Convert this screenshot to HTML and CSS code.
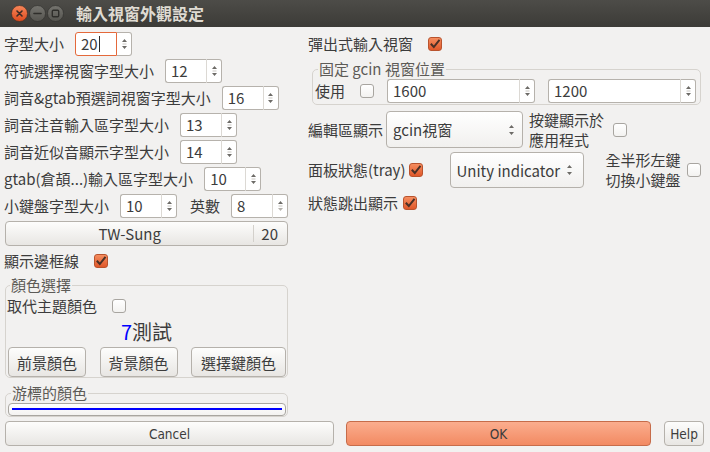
FILE: index.html
```html
<!DOCTYPE html>
<html lang="zh-Hant">
<head>
<meta charset="utf-8">
<title>輸入視窗外觀設定</title>
<link rel="stylesheet" href="styles.css">
</head>
<body>
<div class="window">
  <header class="titlebar">
    <div class="wm-buttons">
      <svg class="wm" width="17" height="17" viewBox="0 0 17 17">
        <defs><linearGradient id="gc" x1="0" y1="0" x2="0" y2="1"><stop offset="0" stop-color="#f7875a"/><stop offset="1" stop-color="#dc4a1e"/></linearGradient></defs>
        <circle cx="8.5" cy="8.5" r="8" fill="url(#gc)" stroke="#3a2a22" stroke-width="0.6"/>
        <path d="M6 6 L11 11 M11 6 L6 11" stroke="#3b2b25" stroke-width="1.6" stroke-linecap="round"/>
      </svg>
      <svg class="wm" width="17" height="17" viewBox="0 0 17 17">
        <defs><linearGradient id="gm" x1="0" y1="0" x2="0" y2="1"><stop offset="0" stop-color="#75746f"/><stop offset="1" stop-color="#55544f"/></linearGradient></defs>
        <circle cx="8.5" cy="8.5" r="8" fill="url(#gm)" stroke="#2e2d2a" stroke-width="0.6"/>
        <path d="M5 8.5 H12" stroke="#2f2e2b" stroke-width="1.6" stroke-linecap="round"/>
      </svg>
      <svg class="wm" width="17" height="17" viewBox="0 0 17 17">
        <circle cx="8.5" cy="8.5" r="8" fill="url(#gm)" stroke="#2e2d2a" stroke-width="0.6"/>
        <rect x="5.3" y="5.3" width="6.4" height="6.4" rx="1" fill="none" stroke="#2f2e2b" stroke-width="1.4"/>
      </svg>
    </div>
    <h1 class="title">輸入視窗外觀設定</h1>
  </header>

  <main class="content">
    <section class="col-left">
      <div class="row">
        <span class="lbl">字型大小</span>
        <div class="spin spin-s focus"><span class="spin-val">20<span class="caret"></span></span><span class="spin-btns"><svg width="7" height="18" viewBox="0 0 7 18"><path d="M1 7 L3.5 4 L6 7 Z M1 11 L3.5 14 L6 11 Z" fill="#6d6b67"/><path d="M1.5 9 H5.5" stroke="#c9c6c1" stroke-width="1"/></svg></span></div>
      </div>
      <div class="row">
        <span class="lbl">符號選擇視窗字型大小</span>
        <div class="spin spin-s"><span class="spin-val">12</span><span class="spin-btns"><svg width="7" height="18" viewBox="0 0 7 18"><path d="M1 7 L3.5 4 L6 7 Z M1 11 L3.5 14 L6 11 Z" fill="#6d6b67"/><path d="M1.5 9 H5.5" stroke="#c9c6c1" stroke-width="1"/></svg></span></div>
      </div>
      <div class="row">
        <span class="lbl">詞音&amp;gtab預選詞視窗字型大小</span>
        <div class="spin spin-s"><span class="spin-val">16</span><span class="spin-btns"><svg width="7" height="18" viewBox="0 0 7 18"><path d="M1 7 L3.5 4 L6 7 Z M1 11 L3.5 14 L6 11 Z" fill="#6d6b67"/><path d="M1.5 9 H5.5" stroke="#c9c6c1" stroke-width="1"/></svg></span></div>
      </div>
      <div class="row">
        <span class="lbl">詞音注音輸入區字型大小</span>
        <div class="spin spin-s"><span class="spin-val">13</span><span class="spin-btns"><svg width="7" height="18" viewBox="0 0 7 18"><path d="M1 7 L3.5 4 L6 7 Z M1 11 L3.5 14 L6 11 Z" fill="#6d6b67"/><path d="M1.5 9 H5.5" stroke="#c9c6c1" stroke-width="1"/></svg></span></div>
      </div>
      <div class="row">
        <span class="lbl">詞音近似音顯示字型大小</span>
        <div class="spin spin-s"><span class="spin-val">14</span><span class="spin-btns"><svg width="7" height="18" viewBox="0 0 7 18"><path d="M1 7 L3.5 4 L6 7 Z M1 11 L3.5 14 L6 11 Z" fill="#6d6b67"/><path d="M1.5 9 H5.5" stroke="#c9c6c1" stroke-width="1"/></svg></span></div>
      </div>
      <div class="row">
        <span class="lbl">gtab(倉頡...)輸入區字型大小</span>
        <div class="spin spin-s"><span class="spin-val">10</span><span class="spin-btns"><svg width="7" height="18" viewBox="0 0 7 18"><path d="M1 7 L3.5 4 L6 7 Z M1 11 L3.5 14 L6 11 Z" fill="#6d6b67"/><path d="M1.5 9 H5.5" stroke="#c9c6c1" stroke-width="1"/></svg></span></div>
      </div>
      <div class="row">
        <span class="lbl">小鍵盤字型大小</span>
        <div class="spin spin-s"><span class="spin-val">10</span><span class="spin-btns"><svg width="7" height="18" viewBox="0 0 7 18"><path d="M1 7 L3.5 4 L6 7 Z M1 11 L3.5 14 L6 11 Z" fill="#6d6b67"/><path d="M1.5 9 H5.5" stroke="#c9c6c1" stroke-width="1"/></svg></span></div>
        <span class="lbl lbl-en">英數</span>
        <div class="spin spin-s"><span class="spin-val">8</span><span class="spin-btns"><svg width="7" height="18" viewBox="0 0 7 18"><path d="M1 7 L3.5 4 L6 7 Z" fill="#6d6b67"/><path d="M1 11 L3.5 14 L6 11 Z" fill="#b5b2ad"/><path d="M1.5 9 H5.5" stroke="#c9c6c1" stroke-width="1"/></svg></span></div>
      </div>
      <button class="btn font-btn"><span class="font-name">TW-Sung</span><span class="font-size">20</span></button>
      <div class="row">
        <span class="lbl">顯示邊框線</span>
        <span class="check on ck-gap"><svg width="12" height="12" viewBox="0 0 12 12"><path d="M1.8 5.8 L4.8 9 L10.5 1.8" fill="none" stroke="#4a3026" stroke-width="2"/></svg></span>
      </div>

      <fieldset class="frame color-frame">
        <legend>顏色選擇</legend>
        <div class="row row-tight">
          <span class="lbl">取代主題顏色</span>
          <span class="check ck-gap"></span>
        </div>
        <div class="sample"><span class="sample-num">7</span>測試</div>
        <div class="color-btns">
          <button class="btn cbtn">前景顏色</button>
          <button class="btn cbtn">背景顏色</button>
          <button class="btn cbtn cbtn-wide">選擇鍵顏色</button>
        </div>
      </fieldset>

      <fieldset class="frame cursor-frame">
        <legend>游標的顏色</legend>
        <div class="cursor-bar"><div class="cursor-line"></div></div>
      </fieldset>
    </section>

    <section class="col-right">
      <div class="row">
        <span class="lbl">彈出式輸入視窗</span>
        <span class="check on ck-gap"><svg width="12" height="12" viewBox="0 0 12 12"><path d="M1.8 5.8 L4.8 9 L10.5 1.8" fill="none" stroke="#4a3026" stroke-width="2"/></svg></span>
      </div>

      <fieldset class="frame pos-frame">
        <legend>固定 gcin 視窗位置</legend>
        <div class="row">
          <span class="lbl">使用</span>
          <span class="check use-check"></span>
          <div class="spin spin-l pos1"><span class="spin-val">1600</span><span class="spin-btns"><svg width="7" height="18" viewBox="0 0 7 18"><path d="M1 7 L3.5 4 L6 7 Z M1 11 L3.5 14 L6 11 Z" fill="#6d6b67"/><path d="M1.5 9 H5.5" stroke="#c9c6c1" stroke-width="1"/></svg></span></div>
          <div class="spin spin-l pos2"><span class="spin-val">1200</span><span class="spin-btns"><svg width="7" height="18" viewBox="0 0 7 18"><path d="M1 7 L3.5 4 L6 7 Z M1 11 L3.5 14 L6 11 Z" fill="#6d6b67"/><path d="M1.5 9 H5.5" stroke="#c9c6c1" stroke-width="1"/></svg></span></div>
        </div>
      </fieldset>

      <div class="row row-combo edit-row">
        <span class="lbl">編輯區顯示</span>
        <div class="combo combo-edit"><span class="combo-text">gcin視窗</span><svg width="7" height="14" viewBox="0 0 7 14"><path d="M1 5 L3.5 2 L6 5 Z M1 9 L3.5 12 L6 9 Z" fill="#6d6b67"/></svg></div>
        <span class="lbl2 keys-lbl">按鍵顯示於<br>應用程式</span>
        <span class="check keys-check"></span>
      </div>

      <div class="row row-combo tray-row">
        <span class="lbl">面板狀態(tray)</span>
        <span class="check on tray-check"><svg width="12" height="12" viewBox="0 0 12 12"><path d="M1.8 5.8 L4.8 9 L10.5 1.8" fill="none" stroke="#4a3026" stroke-width="2"/></svg></span>
        <div class="combo combo-tray"><span class="combo-text">Unity indicator</span><svg width="7" height="14" viewBox="0 0 7 14"><path d="M1 5 L3.5 2 L6 5 Z M1 9 L3.5 12 L6 9 Z" fill="#6d6b67"/></svg></div>
        <span class="lbl2 shift-lbl">全半形左鍵<br>切換小鍵盤</span>
        <span class="check shift-check"></span>
      </div>

      <div class="row status-row">
        <span class="lbl">狀態跳出顯示</span>
        <span class="check on status-check"><svg width="12" height="12" viewBox="0 0 12 12"><path d="M1.8 5.8 L4.8 9 L10.5 1.8" fill="none" stroke="#4a3026" stroke-width="2"/></svg></span>
      </div>
    </section>
  </main>

  <footer class="actions">
    <button class="btn act cancel">Cancel</button>
    <button class="btn act ok">OK</button>
    <button class="btn act help">Help</button>
  </footer>
</div>
</body>
</html>
```

FILE: styles.css
```css
* { box-sizing: border-box; }
html, body { margin: 0; padding: 0; }
body {
  width: 710px;
  height: 452px;
  overflow: hidden;
  background: #f2f1f0;
  font-family: "Noto Sans CJK TC", "Noto Sans", sans-serif;
  font-size: 15px;
  color: #3c3c3c;
}
.window {
  width: 710px;
  height: 452px;
  display: flex;
  flex-direction: column;
}

/* title bar */
.titlebar {
  flex: none;
  height: 27px;
  display: flex;
  align-items: center;
  padding-left: 11px;
  background: linear-gradient(#4d4c48, #3c3b37);
}
.wm-buttons { display: flex; gap: 1px; }
.wm { display: block; }
.title {
  margin: 0 0 0 12px;
  font-size: 16px;
  font-weight: bold;
  color: #dfdbd2;
  line-height: 27px;
}

/* main */
.content {
  flex: 1;
  display: flex;
  padding: 5px 0 0 4px;
}
.col-left {
  width: 284px;
  display: flex;
  flex-direction: column;
  gap: 3px;
}
.col-right {
  margin-left: 20px;
  width: 395px;
  display: flex;
  flex-direction: column;
}
.row {
  display: flex;
  align-items: center;
  height: 24px;
  white-space: nowrap;
}
.lbl { margin-right: 11px; line-height: 20px; }
.lbl-en { margin-left: 13px; }
.row-tight { height: 20px; }

/* spin buttons */
.spin { display: flex; height: 24px; flex: none; }
.spin-s { width: 57px; }
.spin-l { width: 148px; }
.spin-val {
  flex: 1;
  display: flex;
  align-items: center;
  padding-left: 5px;
  background: #fff;
  border: 1px solid #b6b2ac;
  border-right-color: #dcd9d4;
  border-radius: 3px 0 0 3px;
  line-height: 20px;
}
.spin-btns {
  width: 15px;
  display: flex;
  align-items: center;
  justify-content: center;
  background: #fff;
  border: 1px solid #b6b2ac;
  border-left: none;
  border-radius: 0 3px 3px 0;
}
.spin-btns svg { display: block; }
.focus .spin-val { border-color: #e4693b; }
.caret {
  display: inline-block;
  width: 1px;
  height: 16px;
  margin-left: 1px;
  background: #2b2b2b;
}

/* checkboxes */
.check {
  flex: none;
  width: 14px;
  height: 14px;
  border: 1px solid #a8a5a0;
  border-radius: 3px;
  background: linear-gradient(#ffffff, #f3f2f0);
  display: flex;
  align-items: center;
  justify-content: center;
}
.check.on {
  background: linear-gradient(#f58d5f, #e0582a);
  border-color: #b9532d;
}
.check svg { display: block; }
.ck-gap { margin-left: 4px; }

/* buttons */
.btn {
  font: inherit;
  color: #3c3c3c;
  border: 1px solid #b5b1ab;
  border-radius: 4px;
  background: linear-gradient(#fdfdfc, #e8e6e3);
  padding: 0;
  margin: 0;
}
.font-btn {
  height: 25px;
  width: 283px;
  margin-left: 1px;
  display: flex;
  align-items: center;
}
.font-name { flex: 1; text-align: center; }
.font-size {
  border-left: 1px solid #d3d0cb;
  height: 17px;
  line-height: 17px;
  padding: 0 9px 0 7px;
}

/* frames */
.frame {
  margin: 0 0 0 1px;
  border: 1px solid #d6d3ce;
  border-radius: 5px;
  min-width: 0;
}
.frame legend {
  padding: 0 1px;
  margin-left: 3px;
  line-height: 16px;
  color: #5d5b57;
}
.color-frame {
  width: 283px;
  margin-top: 1px;
  padding: 3px 1px 0 1px;
}
.sample {
  margin-top: 2px;
  height: 28px;
  line-height: 28px;
  text-align: center;
  font-size: 20px;
}
.sample-num { color: #0000ff; }
.color-btns {
  margin-top: 1px;
  display: flex;
  justify-content: space-between;
  padding-left: 1px;
}
.cbtn { width: 78px; height: 30px; }
.cbtn-wide { width: 95px; }
.cursor-frame {
  width: 283px;
  margin-top: 4px;
  padding: 2px 1px 0 2px;
}
.cursor-bar {
  height: 13px;
  border: 1px solid #a9a6a1;
  border-radius: 4px;
  background: linear-gradient(#ffffff, #f4f3f1);
  padding: 4px 3px 0;
}
.cursor-line { height: 2px; background: #0000ff; }

/* right column */
.pos-frame {
  margin: 5px 0 0 4px;
  width: 389px;
  padding: 2px 2px 1px 2px;
}
.pos-frame legend { margin-left: 3px; }
.use-check { margin-left: 4px; }
.pos1 { margin-left: 13px; }
.pos2 { margin-left: 13px; }

.row-combo { height: 37px; }
.edit-row { margin-top: 6px; }
.tray-row { margin-top: 4px; height: 36px; }
.status-row { margin-top: 3px; }
.combo {
  flex: none;
  height: 100%;
  display: flex;
  align-items: center;
  justify-content: space-between;
  border: 1px solid #b5b1ab;
  border-radius: 4px;
  background: linear-gradient(#ffffff, #f1f0ee);
  padding: 0 7px 0 6px;
}
.combo svg { display: block; }
.combo-edit { width: 137px; margin-left: -8px; }
.combo-tray { width: 134px; margin-left: 27px; padding-right: 10px; padding-left: 5px; }
.lbl2 { line-height: 20px; white-space: nowrap; }
.keys-lbl { margin-left: 6px; }
.keys-check { margin-left: 9px; }
.tray-check { margin-left: -7px; }
.shift-lbl { margin-left: 21px; }
.shift-check { margin-left: 6px; }
.status-check { margin-left: -6px; }

/* footer */
.actions {
  flex: none;
  display: flex;
  padding: 0 0 6px 5px;
}
.act {
  height: 25px;
  font-family: "DejaVu Sans Condensed", "DejaVu Sans", sans-serif;
  font-size: 13.5px;
}
.cancel { width: 329px; }
.ok {
  width: 305px;
  margin-left: 12px;
  background: linear-gradient(#fbad8e, #f28a62);
  border-color: #c66c4a;
}
.help { width: 40px; margin-left: 13px; }
```
